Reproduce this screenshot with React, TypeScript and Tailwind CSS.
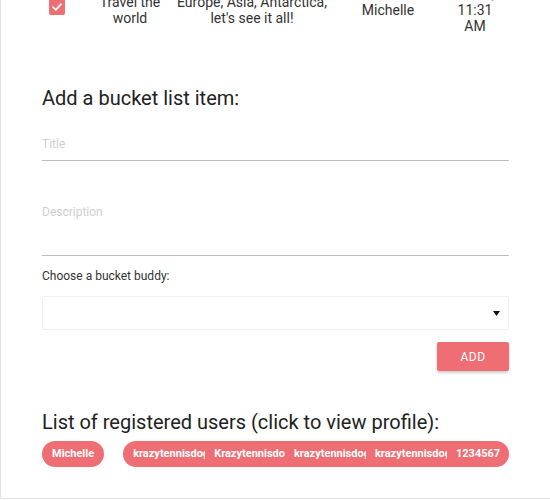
import React from 'react';

const users = ['krazytennisdog', 'Krazytennisdo', 'krazytennisdog1', 'krazytennisdog2', '1234567'];

const App: React.FC = () => {
  return (
    <div className="min-h-[500px] bg-white font-['Roboto',sans-serif] text-[#333] overflow-hidden">
      <div className="w-[560px] border-l border-b border-[#e0e0e0] pl-[41px] pr-[50px] pb-[31px]">
        {/* last row of the bucket list table */}
        <div className="-mt-[20px] h-[60px] flex items-center text-[14px] leading-[16px] text-center">
          <div className="w-[30px] flex justify-center">
            <div className="-mt-[6px] w-[16px] h-[16px] rounded-[2px] bg-[#ee6e73] flex items-center justify-center">
              <svg width="10" height="8" viewBox="0 0 10 8" fill="none">
                <path d="M1 4.2 L3.8 6.8 L9 1.2" stroke="white" strokeWidth="1.8" strokeLinecap="round" strokeLinejoin="round" />
              </svg>
            </div>
          </div>
          <div className="w-[90px] ml-[13px]">Travel the world</div>
          <div className="w-[150px] ml-[2px]">Europe, Asia, Antarctica, let's see it all!</div>
          <div className="w-[80px] ml-[21px]">Michelle</div>
          <div className="w-[40px] ml-[27px]">
            Nov 5,
            <br />
            11:31
            <br />
            AM
          </div>
        </div>

        <h2 className="mt-[44px] text-[20px] leading-[28px] text-[#222]">Add a bucket list item:</h2>

        <div className="mt-[24px] w-[467px] border-b border-[#bdbdbd] pb-[8px] text-[12px] leading-[16px] text-[#cfcfcf]">
          Title
        </div>
        <div className="mt-[43px] w-[467px] border-b border-[#bdbdbd] pb-[35px] text-[12px] leading-[16px] text-[#cfcfcf]">
          Description
        </div>

        <div className="mt-[12px] text-[12px] leading-[16px] text-[#333]">Choose a bucket buddy:</div>
        <div className="mt-[12px] w-[467px] h-[34px] border border-[#f0f0f0] rounded-[2px] flex items-center justify-end pr-[8px]">
          <svg width="7" height="5" viewBox="0 0 7 5">
            <path d="M0 0 H7 L3.5 5 Z" fill="#111" />
          </svg>
        </div>

        <div className="w-[467px] flex justify-end mt-[12px]">
          <button className="w-[72px] h-[29px] rounded-[2px] bg-[#ee6e73] text-white text-[12px] tracking-[0.5px] shadow-[0_2px_3px_rgba(0,0,0,0.2)]">
            ADD
          </button>
        </div>

        <h2 className="mt-[37px] text-[20px] leading-[28px] text-[#222]">List of registered users (click to view profile):</h2>

        <div className="mt-[5px] flex items-center text-[11px] font-bold text-white">
          <div className="h-[26px] px-[10px] rounded-full bg-[#ee6e73] flex items-center">Michelle</div>
          <div className="ml-[19px] h-[26px] pl-[10px] pr-[9px] rounded-full bg-[#ee6e73] flex items-center gap-[9px]">
            {users.map((u) => (
              <span key={u} className="max-w-[72px] overflow-hidden whitespace-nowrap">
                {u}
              </span>
            ))}
          </div>
        </div>
      </div>
    </div>
  );
};

export default App;
